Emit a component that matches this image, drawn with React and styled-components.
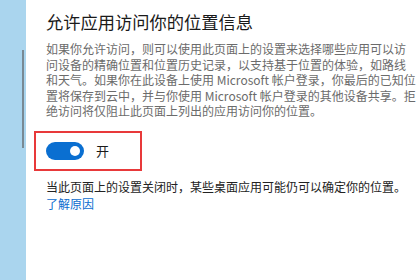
import React from "react";
import styled, { createGlobalStyle } from "styled-components";

const Global = createGlobalStyle`
  html, body { margin: 0; padding: 0; background: #ffffff; }
  body { font-family: "Noto Sans CJK SC", "Noto Sans", sans-serif; }
`;

const Page = styled.div`
  display: flex;
  width: 420px;
  height: 280px;
  overflow: hidden;
  background: #ffffff;
`;

const Sidebar = styled.div`
  width: 26px;
  flex: none;
  background: #aad5ee;
  display: flex;
  flex-direction: column;
  padding-top: 50px;
  box-sizing: border-box;
`;

const ScrollThumb = styled.div`
  width: 2px;
  height: 98px;
  margin-left: 22px;
  background: #7a8a94;
`;

const Content = styled.div`
  flex: 1;
  padding: 10px 0 0 20px;
  display: flex;
  flex-direction: column;
`;

const Title = styled.h1`
  margin: 0;
  font-size: 17.25px;
  line-height: 24px;
  font-weight: 400;
  color: #1a1a1a;
  white-space: nowrap;
`;

const Paragraph = styled.p`
  margin: 7px 0 0;
  width: 370px;
  font-size: 12px;
  line-height: 15.5px;
  color: #6b6b6b;
`;

const Highlight = styled.div`
  margin: 12px 0 0 -12px;
  width: 108px;
  height: 40px;
  flex: none;
  box-sizing: border-box;
  border: 2px solid #e8393a;
  display: flex;
  align-items: center;
  padding-left: 10px;
  gap: 12px;
`;

const Toggle = styled.div`
  width: 38px;
  height: 18px;
  border-radius: 9px;
  background: ${(p) => (p.$on ? "#0a6fd1" : "#ffffff")};
  display: flex;
  align-items: center;
  justify-content: ${(p) => (p.$on ? "flex-end" : "flex-start")};
  padding: 0 4px;
  box-sizing: border-box;
`;

const Knob = styled.div`
  width: 10px;
  height: 10px;
  border-radius: 50%;
  background: #ffffff;
`;

const ToggleLabel = styled.span`
  font-size: 13px;
  color: #1a1a1a;
`;

const Note = styled.p`
  margin: 7px 0 0;
  font-size: 12px;
  line-height: 17.5px;
  color: #222222;
  white-space: nowrap;
`;

const Link = styled.a`
  color: #0b6ccf;
  text-decoration: none;
`;

export default function App() {
  return (
    <Page>
      <Global />
      <Sidebar>
        <ScrollThumb />
      </Sidebar>
      <Content>
        <Title>允许应用访问你的位置信息</Title>
        <Paragraph>
          如果你允许访问，则可以使用此页面上的设置来选择哪些应用可以访问设备的精确位置和位置历史记录，以支持基于位置的体验，如路线和天气。如果你在此设备上使用 Microsoft 帐户登录，你最后的已知位置将保存到云中，并与你使用 Microsoft 帐户登录的其他设备共享。拒绝访问将仅阻止此页面上列出的应用访问你的位置。
        </Paragraph>
        <Highlight>
          <Toggle $on>
            <Knob />
          </Toggle>
          <ToggleLabel>开</ToggleLabel>
        </Highlight>
        <Note>
          当此页面上的设置关闭时，某些桌面应用可能仍可以确定你的位置。
          <br />
          <Link href="#">了解原因</Link>
        </Note>
      </Content>
    </Page>
  );
}
